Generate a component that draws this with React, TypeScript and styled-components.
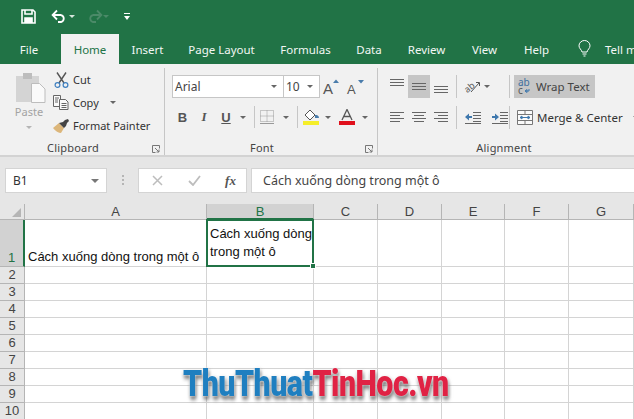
import { Fragment } from 'react';
import styled, { createGlobalStyle } from 'styled-components';

const GlobalStyle = createGlobalStyle`
  html, body { margin: 0; padding: 0; width: 634px; height: 419px; overflow: hidden; background: #fff; }
  * { box-sizing: border-box; }
`;

const UI_FONT = `"Noto Sans", "Open Sans", sans-serif`;
const GREEN = '#217346';

const Page = styled.div`
  position: relative;
  width: 634px;
  height: 419px;
  overflow: hidden;
  font-family: ${UI_FONT};
  display: flex;
  flex-direction: column;
`;

const TitleBar = styled.div`
  height: 34px;
  background: ${GREEN};
  display: flex;
  align-items: center;
  padding: 0 0 2px 21px;
`;

const QuickSlot = styled.div<{ $gap: number }>`
  display: flex;
  margin-left: ${(p) => p.$gap}px;
`;

const TabBar = styled.div`
  height: 30px;
  background: ${GREEN};
  display: flex;
  overflow: hidden;
`;

const Tab = styled.div<{ $active?: boolean; $width: number; $gap?: number }>`
  flex: none;
  width: ${(p) => p.$width}px;
  margin-left: ${(p) => p.$gap ?? 0}px;
  font-size: 11.5px;
  line-height: 31px;
  text-align: center;
  white-space: nowrap;
  color: ${(p) => (p.$active ? GREEN : '#f2f7f4')};
  background: ${(p) => (p.$active ? '#f1f1f1' : 'transparent')};
`;

const TellMe = styled.div`
  flex: none;
  display: flex;
  align-items: center;
  gap: 14px;
  margin-left: 15px;
  font-size: 11.5px;
  color: #f2f7f4;
  white-space: nowrap;
  svg { margin-top: -1px; }
`;

const Ribbon = styled.div`
  height: 93px;
  background: #f1f1f1;
  border-bottom: 2px solid #d3d3d3;
  display: flex;
  padding-top: 4px;
`;

const Group = styled.div<{ $width: number; $divider?: boolean }>`
  position: relative;
  width: ${(p) => p.$width}px;
  flex: none;
  display: flex;
  flex-direction: column;
  border-right: ${(p) => (p.$divider ? '1px solid #c6c6c6' : 'none')};
`;

const GroupBody = styled.div`
  flex: 1;
  display: flex;
  min-height: 0;
`;

const GroupLabel = styled.div<{ $inset?: number; $width?: number }>`
  height: 17px;
  width: ${(p) => (p.$width ? `${p.$width}px` : 'auto')};
  padding: 2px ${(p) => p.$inset ?? 0}px 0 0;
  font-size: 11px;
  line-height: 15px;
  letter-spacing: 0.2px;
  text-align: center;
  color: #444;
`;

const Launcher = styled.svg`
  position: absolute;
  right: 4px;
  bottom: 2px;
`;

const PasteCol = styled.div`
  width: 46px;
  margin-left: 8px;
  display: flex;
  flex-direction: column;
  align-items: center;
  padding-top: 4px;
  font-size: 11px;
  line-height: 15px;
  color: #a3a3a3;
  span { margin: 0 4px 0 0; }
  i { margin: 7px 4px 0 0; }
`;

const ClipCol = styled.div`
  display: flex;
  flex-direction: column;
  margin-left: -2px;
`;

const ClipRow = styled.div`
  height: 23px;
  display: flex;
  align-items: center;
  gap: 3px;
  font-size: 11px;
  color: #333;
  white-space: nowrap;
`;

const ClipIcon = styled.div`
  width: 18px;
  display: flex;
  justify-content: center;
`;

const Caret = styled.i<{ $tone?: string; $gap?: number; $big?: boolean }>`
  display: inline-block;
  flex: none;
  width: 0;
  height: 0;
  margin-left: ${(p) => p.$gap ?? 0}px;
  border-left: ${(p) => (p.$big ? 4 : 3)}px solid transparent;
  border-right: ${(p) => (p.$big ? 4 : 3)}px solid transparent;
  border-top: ${(p) => (p.$big ? 4 : 3)}px solid ${(p) => p.$tone ?? '#666'};
`;

const FontStack = styled.div`
  display: flex;
  flex-direction: column;
  gap: 8px;
  padding: 7px 0 0 7px;
`;

const FontRow = styled.div`
  display: flex;
  align-items: center;
`;

const Combo = styled.div<{ $width: number }>`
  width: ${(p) => p.$width}px;
  height: 23px;
  background: #fff;
  border: 1px solid #c6c6c6;
  display: flex;
  align-items: center;
  justify-content: space-between;
  padding: 0 6px 0 2px;
  margin-right: -1px;
  font-size: 12px;
  color: #444;
`;

const IconCell = styled.div<{ $width: number; $height?: number; $on?: boolean; $align?: string; $pad?: number }>`
  width: ${(p) => p.$width}px;
  height: ${(p) => p.$height ?? 22}px;
  flex: none;
  display: flex;
  padding: ${(p) => p.$pad ?? 0}px 0;
  align-items: ${(p) => p.$align ?? 'center'};
  justify-content: center;
  background: ${(p) => (p.$on ? '#c6c6c6' : 'transparent')};
`;

const Flipped = styled(IconCell)`
  transform: scaleX(-1);
`;

const StyleLetter = styled.span<{ $italic?: boolean; $under?: boolean; $serif?: boolean }>`
  font-family: ${(p) => (p.$serif ? '"Liberation Serif", serif' : '"Liberation Sans", sans-serif')};
  font-size: 13px;
  font-weight: bold;
  font-style: ${(p) => (p.$italic ? 'italic' : 'normal')};
  text-decoration: ${(p) => (p.$under ? 'underline' : 'none')};
  color: #555;
`;

const VRule = styled.div<{ $height?: number; $gap?: number }>`
  width: 1px;
  height: ${(p) => p.$height ?? 22}px;
  margin-left: ${(p) => p.$gap ?? 0}px;
  background: #c6c6c6;
  flex: none;
`;

const AlignGrid = styled.div`
  display: grid;
  grid-template-columns: 22px 22px 22px 4px 1px 7px 26px 19px 1px;
  grid-template-rows: 23px 23px;
  row-gap: 8px;
  padding: 7px 0 0 8px;
`;

const WrapCol = styled.div`
  display: flex;
  flex-direction: column;
  gap: 8px;
  padding: 7px 0 0 4px;
`;

const WrapButton = styled.div`
  width: 81px;
  height: 23px;
  background: #c6c6c6;
  display: flex;
  align-items: center;
  gap: 4px;
  padding-left: 4px;
  font-size: 11.5px;
  color: #444;
`;

const MergeButton = styled.div`
  height: 23px;
  display: flex;
  align-items: center;
  gap: 4px;
  padding-left: 3px;
  font-size: 11.5px;
  white-space: nowrap;
  color: #333;
`;

const FormulaBar = styled.div`
  height: 47px;
  background: #e6e6e6;
  display: flex;
  align-items: flex-start;
  padding: 11px 0 0 5px;
`;

const NameBox = styled.div`
  width: 102px;
  height: 25px;
  background: #fff;
  border: 1px solid #d4d4d4;
  display: flex;
  align-items: center;
  justify-content: space-between;
  padding: 0 7px;
  font-size: 12px;
  color: #333;
`;

const Grip = styled.div`
  width: 31px;
  height: 25px;
  display: flex;
  align-items: center;
  justify-content: center;
  padding-left: 1px;
`;

const FxBox = styled.div`
  width: 109px;
  height: 25px;
  background: #fff;
  border: 1px solid #d4d4d4;
  display: grid;
  grid-template-columns: 37px 37px 35px;
  place-items: center;
`;

const FxLabel = styled.span`
  font-family: "Liberation Serif", serif;
  font-style: italic;
  font-weight: bold;
  font-size: 13px;
  color: #555;
`;

const FormulaInput = styled.div`
  flex: 1;
  height: 25px;
  margin-left: 4px;
  background: #fff;
  border: 1px solid #d4d4d4;
  border-right: none;
  padding-left: 11px;
  font-size: 12.5px;
  line-height: 23px;
  color: #444;
  white-space: nowrap;
`;

const Sheet = styled.div`
  position: relative;
  flex: 1;
  display: grid;
  grid-template-columns: 25px 182px 107px 64px 64px 63px 64px 65px;
  grid-template-rows: 16px 47px repeat(9, 17px);
  background: #fff;
  font-family: "Liberation Sans", Arial, sans-serif;
  overflow: hidden;
`;

const Corner = styled.div`
  background: #e6e6e6;
  border-right: 1px solid #b5b5b5;
  border-bottom: 1px solid #b5b5b5;
  display: flex;
  align-items: flex-end;
  justify-content: flex-end;
  padding: 0 3px 2px 0;
`;

const ColHead = styled.div<{ $on?: boolean }>`
  background: ${(p) => (p.$on ? '#d2d2d2' : '#e6e6e6')};
  border-right: 1px solid #b5b5b5;
  border-bottom: ${(p) => (p.$on ? `2px solid ${GREEN}` : '1px solid #b5b5b5')};
  color: ${(p) => (p.$on ? GREEN : '#444')};
  font-size: 13px;
  line-height: 16px;
  text-align: center;
`;

const RowHead = styled.div<{ $on?: boolean }>`
  background: ${(p) => (p.$on ? '#d2d2d2' : '#e6e6e6')};
  border-right: ${(p) => (p.$on ? `2px solid ${GREEN}` : '1px solid #b5b5b5')};
  border-bottom: 1px solid #b5b5b5;
  color: ${(p) => (p.$on ? GREEN : '#444')};
  font-size: 13px;
  line-height: 15px;
  text-align: center;
  display: flex;
  align-items: flex-end;
  justify-content: center;
  padding-bottom: 1px;
`;

const Cell = styled.div`
  border-right: 1px solid #d4d4d4;
  border-bottom: 1px solid #d4d4d4;
  font-size: 13px;
  line-height: 18px;
  color: #111;
  padding: 0 3px;
  display: flex;
  align-items: flex-end;
  white-space: nowrap;
`;

const ActiveCell = styled(Cell)`
  position: relative;
  margin: -1px 0 0 -1px;
  border: 2px solid ${GREEN};
  white-space: normal;
  padding: 0 0 0 2px;
  align-items: center;
`;

const FillHandle = styled.div`
  position: absolute;
  right: -4px;
  bottom: -4px;
  width: 6px;
  height: 6px;
  background: ${GREEN};
  border: 1px solid #fff;
`;

const Watermark = styled.div`
  position: absolute;
  left: 183px;
  top: 160px;
  font-family: "Roboto", "Liberation Sans", sans-serif;
  font-weight: 900;
  font-size: 37px;
  line-height: 40px;
  letter-spacing: -0.6px;
  white-space: nowrap;
  transform-origin: left top;
  transform: scaleX(0.82);
  filter: drop-shadow(0 0 1px #fff) drop-shadow(1px 3px 2px rgba(60, 60, 60, 0.75));
`;

const Blue = styled.span`color: #1f7fc0;`;
const Red = styled.span`color: #e02244;`;

const GlyphSvg = styled.svg`
  overflow: visible;
`;

const SaveIcon = () => (
  <svg width="15" height="15" viewBox="0 0 15 15" fill="none" stroke="#fff" strokeWidth="1.6">
    <path d="M1 1h11l2 2v11H1z" />
    <path d="M4 1v4h7V1" />
    <path d="M4 14V9h7v5" fill="#fff" />
  </svg>
);

const UndoIcon = ({ color }: { color: string }) => (
  <svg width="16" height="14" viewBox="0 0 16 14" fill="none" stroke={color} strokeWidth="1.8">
    <path d="M2 6h8a3.6 3.6 0 0 1 0 7H7" />
    <path d="M6 1.500 1.600 6 6 10.500" />
  </svg>
);

const PasteIcon = () => (
  <svg width="30" height="32" viewBox="0 0 30 32">
    <rect x="0" y="4" width="23" height="26" fill="#d4d4d4" />
    <rect x="7" y="1" width="9" height="6" fill="#bdbdbd" />
    <path d="M15.500 11.500h8l5.500 5.500v13.500h-13.500z" fill="#fafafa" stroke="#bdbdbd" />
  </svg>
);

const CutIcon = () => (
  <svg width="15" height="16" viewBox="0 0 15 16" fill="none">
    <path d="M3 0.500 10 11M12 0.500 5 11" stroke="#555" strokeWidth="1.4" />
    <circle cx="3.500" cy="13" r="2.400" stroke="#3f7fbf" strokeWidth="1.200" />
    <circle cx="11.500" cy="13" r="2.400" stroke="#3f7fbf" strokeWidth="1.200" />
  </svg>
);

const CopyIcon = () => (
  <svg width="16" height="15" viewBox="0 0 16 15" fill="#fafafa" stroke="#666">
    <path d="M.5.500h7v11h-7z" />
    <path d="M6.500 4.500h6l2.500 2.500v7.500h-8.500z" />
    <path d="M8.500 8.500h5M8.500 10.500h5M8.500 12.500h5M2 3h4M2 5h3M2 7h3" strokeWidth="1" />
  </svg>
);

const PainterIcon = () => (
  <svg width="17" height="14" viewBox="0 0 17 14">
    <path d="M0 9l6-5 5 5-3 5C6 14 2 12 0 9z" fill="#dcb67a" />
    <path d="M6 4l4-1 2-2 3-1 1 2-2 2-1 3-2 2z" fill="#444" />
  </svg>
);

const LauncherIcon = () => (
  <Launcher width="8" height="8" viewBox="0 0 8 8" fill="none" stroke="#777">
    <path d="M7.500 3.500V.5H.5v7h3" />
    <path d="M3 3l4 4M7 4.500V7H4.500" />
  </Launcher>
);

const GrowFont = ({ up }: { up: boolean }) => (
  <GlyphSvg width="18" height="18" viewBox="0 0 18 18">
    <text x="0" y="16" fontFamily="Liberation Sans" fontSize={up ? 15 : 13} fill="#555">A</text>
    <path d={up ? 'M10 5l3-3.500L16 5z' : 'M11 2h6l-3 3.500z'} fill="#4a7cab" />
  </GlyphSvg>
);

const BordersIcon = () => (
  <svg width="14" height="14" viewBox="0 0 14 14" fill="none" stroke="#999" strokeDasharray="1 1">
    <path d="M.5.500h13v11H.5zM7 .5v11M.5 6h13" />
    <path d="M0 13.500h14" strokeDasharray="none" />
  </svg>
);

const FillColor = () => (
  <svg width="17" height="16" viewBox="0 0 17 16">
    <path d="M2 6l5-5 5 5-5 5z" fill="#fff" stroke="#555" />
    <path d="M12 6c2 0 4 .5 4 3H12z" fill="#4a7cab" />
    <rect y="12" width="16" height="4" fill="#f5ee2a" />
  </svg>
);

const FontColor = () => (
  <svg width="16" height="16" viewBox="0 0 16 16">
    <path d="M3 11 8 0.500 13 11M5 7.500h6" fill="none" stroke="#555" strokeWidth="1.300" />
    <rect y="12" width="16" height="4" fill="#e0101c" />
  </svg>
);

const Lines = ({ widths, anchor = 'left', color = '#666' }: { widths: number[]; anchor?: 'left' | 'center' | 'right'; color?: string }) => (
  <svg width="14" height={widths.length * 3 + 1} viewBox={`0 0 14 ${widths.length * 3 + 1}`} stroke={color}>
    {widths.map((w, i) => {
      const x = anchor === 'left' ? 0 : anchor === 'right' ? 14 - w : (14 - w) / 2;
      return <path key={i} d={`M${x} ${i * 3 + 1.5}h${w}`} />;
    })}
  </svg>
);

const OrientIcon = () => (
  <GlyphSvg width="17" height="15" viewBox="0 0 17 15">
    <text x="0" y="11" transform="rotate(-40 6 8)" fontFamily="Noto Sans" fontSize="9" fill="#555">ab</text>
    <path d="M7 13 15 4M12 3.500h3.500V7" stroke="#555" fill="none" />
  </GlyphSvg>
);

const IndentIcon = ({ out }: { out?: boolean }) => (
  <svg width="16" height="13" viewBox="0 0 16 13" fill="none">
    <path d="M8 1.500h8M8 4.500h8M8 7.500h8M8 10.500h8" stroke="#666" />
    <path d="M0 12.500h16" stroke="#666" />
    <path d={out ? 'M0 6l4-3.500v2.500h3v2H4v2.500z' : 'M7 6 3 2.500v2.500H0v2h3v2.500z'} fill="#3f78ad" />
  </svg>
);

const WrapIcon = () => (
  <GlyphSvg width="14" height="17" viewBox="0 0 14 17">
    <text x="0" y="8" fontFamily="Noto Sans" fontSize="10" fill="#3f6f9f">ab</text>
    <text x="0" y="16" fontFamily="Noto Sans" fontSize="10" fill="#555">c</text>
    <path d="M7 13h4v-2M7 13l2-1.500v3z" stroke="#3f78ad" fill="none" />
  </GlyphSvg>
);

const MergeIcon = () => (
  <svg width="16" height="15" viewBox="0 0 16 15" fill="#fafafa" stroke="#777">
    <path d="M.5.500h15v14H.5z" />
    <path d="M.5 4.500h15M.5 10.500h15M8 .5v4M8 10.500v4" fill="none" />
    <path d="M3 7.500h10M3 7.500l2-1.500v3zM13 7.500l-2-1.500v3z" stroke="#3f78ad" />
  </svg>
);

const RowNumbers = [2, 3, 4, 5, 6, 7, 8, 9, 10];
const Cols = ['A', 'B', 'C', 'D', 'E', 'F', 'G'];
const Tabs = [
  { label: 'Insert', width: 57 },
  { label: 'Page Layout', width: 91 },
  { label: 'Formulas', width: 77 },
  { label: 'Data', width: 50 },
  { label: 'Review', width: 65 },
  { label: 'View', width: 51 },
  { label: 'Help', width: 53 },
];
const TEXT = 'Cách xuống dòng trong một ô';

export default function App() {
  return (
    <Page>
      <GlobalStyle />
      <TitleBar>
        <SaveIcon />
        <QuickSlot $gap={14}>
          <IconCell $width={26}><UndoIcon color="#fff" /><Caret $tone="#d6e6dc" $gap={2} /></IconCell>
        </QuickSlot>
        <QuickSlot $gap={9}>
          <Flipped $width={26}><Caret $tone="#4b8a68" /><UndoIcon color="#4b8a68" /></Flipped>
        </QuickSlot>
        <QuickSlot $gap={13}>
          <svg width="6" height="7" viewBox="0 0 6 7" fill="#fff"><path d="M0 0h6v1H0zM0 3h6L3 7z" /></svg>
        </QuickSlot>
      </TitleBar>
      <TabBar>
        <Tab $width={58}>File</Tab>
        <Tab $active $width={58} $gap={3}>Home</Tab>
        {Tabs.map((t) => (
          <Tab key={t.label} $width={t.width}>{t.label}</Tab>
        ))}
        <TellMe>
          <svg width="13" height="17" viewBox="0 0 13 17" fill="none" stroke="#fff">
            <path d="M4 12C3.500 9.500 1 8.500 1 5.800a5.500 5.300 0 0 1 11 0C12 8.500 9.500 9.500 9 12z" />
            <path d="M4.500 14h4M5.500 16h2" />
          </svg>
          Tell me
        </TellMe>
      </TabBar>

      <Ribbon>
        <Group $width={165} $divider>
          <GroupBody>
            <PasteCol>
              <PasteIcon />
              <span>Paste</span>
              <Caret $tone="#b5b5b5" />
            </PasteCol>
            <ClipCol>
              <ClipRow><ClipIcon><CutIcon /></ClipIcon>Cut</ClipRow>
              <ClipRow><ClipIcon><CopyIcon /></ClipIcon>Copy<Caret $gap={8} /></ClipRow>
              <ClipRow><ClipIcon><PainterIcon /></ClipIcon>Format Painter</ClipRow>
            </ClipCol>
          </GroupBody>
          <GroupLabel $inset={18}>Clipboard</GroupLabel>
          <LauncherIcon />
        </Group>

        <Group $width={213} $divider>
          <GroupBody>
            <FontStack>
              <FontRow>
                <Combo $width={112}>Arial<Caret /></Combo>
                <Combo $width={37}>10<Caret /></Combo>
                <IconCell $width={26} $height={23}><GrowFont up /></IconCell>
                <IconCell $width={22} $height={23}><GrowFont up={false} /></IconCell>
              </FontRow>
              <FontRow>
                <IconCell $width={21}><StyleLetter>B</StyleLetter></IconCell>
                <IconCell $width={22}><StyleLetter $italic $serif>I</StyleLetter></IconCell>
                <IconCell $width={22}><StyleLetter $under>U</StyleLetter></IconCell>
                <IconCell $width={12}><Caret /></IconCell>
                <VRule $gap={5} />
                <IconCell $width={24}><BordersIcon /></IconCell>
                <IconCell $width={14}><Caret /></IconCell>
                <VRule $gap={4} />
                <IconCell $width={26}><FillColor /></IconCell>
                <IconCell $width={8}><Caret /></IconCell>
                <IconCell $width={30}><FontColor /></IconCell>
                <IconCell $width={5}><Caret /></IconCell>
              </FontRow>
            </FontStack>
          </GroupBody>
          <GroupLabel $inset={18}>Font</GroupLabel>
          <LauncherIcon />
        </Group>

        <Group $width={256}>
          <GroupBody>
            <AlignGrid>
              <IconCell $width={22} $height={23} $align="flex-start" $pad={3}><Lines widths={[14, 14, 14]} /></IconCell>
              <IconCell $width={22} $height={23} $on><Lines widths={[14, 14, 14]} /></IconCell>
              <IconCell $width={22} $height={23} $align="flex-end" $pad={3}><Lines widths={[14, 14, 14]} /></IconCell>
              <span />
              <VRule $height={23} />
              <span />
              <IconCell $width={26} $height={23}><OrientIcon /><Caret $gap={3} /></IconCell>
              <span />
              <VRule $height={23} />

              <IconCell $width={22} $height={23}><Lines widths={[14, 10, 14, 10]} /></IconCell>
              <IconCell $width={22} $height={23}><Lines widths={[14, 10, 14, 10]} anchor="center" /></IconCell>
              <IconCell $width={22} $height={23}><Lines widths={[14, 10, 14, 10]} anchor="right" /></IconCell>
              <span />
              <VRule $height={23} />
              <span />
              <IconCell $width={18} $height={23}><IndentIcon out /></IconCell>
              <IconCell $width={20} $height={23}><IndentIcon /></IconCell>
              <VRule $height={23} />
            </AlignGrid>
            <WrapCol>
              <WrapButton><WrapIcon />Wrap Text</WrapButton>
              <MergeButton><MergeIcon />Merge &amp; Center<Caret $gap={6} /></MergeButton>
            </WrapCol>
          </GroupBody>
          <GroupLabel $width={252}>Alignment</GroupLabel>
        </Group>
      </Ribbon>

      <FormulaBar>
        <NameBox>B1<Caret $tone="#777" $big /></NameBox>
        <Grip>
          <svg width="2" height="11" viewBox="0 0 2 11" fill="#b5b5b5"><path d="M0 0h2v2H0zM0 4h2v2H0zM0 8h2v2H0z" /></svg>
        </Grip>
        <FxBox>
          <svg width="11" height="11" viewBox="0 0 11 11" stroke="#bdbdbd" strokeWidth="1.500"><path d="M1 1l9 9M10 1l-9 9" /></svg>
          <svg width="13" height="11" viewBox="0 0 13 11" stroke="#bdbdbd" strokeWidth="1.800" fill="none"><path d="M1 6l4 4 7-9" /></svg>
          <FxLabel>fx</FxLabel>
        </FxBox>
        <FormulaInput>{TEXT}</FormulaInput>
      </FormulaBar>

      <Sheet>
        <Corner>
          <svg width="9" height="9" viewBox="0 0 9 9" fill="#b5b5b5"><path d="M9 0v9H0z" /></svg>
        </Corner>
        {Cols.map((c) => (
          <ColHead key={c} $on={c === 'B'}>{c}</ColHead>
        ))}

        <RowHead $on>1</RowHead>
        <Cell>{TEXT}</Cell>
        <ActiveCell>
          {TEXT}
          <FillHandle />
        </ActiveCell>
        {Cols.slice(2).map((c) => <Cell key={c} />)}

        {RowNumbers.map((n) => (
          <Fragment key={n}>
            <RowHead>{n}</RowHead>
            {Cols.map((c) => <Cell key={c + n} />)}
          </Fragment>
        ))}
        <Watermark>
          <Blue>ThuThuat</Blue><Red>TinHoc.vn</Red>
        </Watermark>
      </Sheet>
    </Page>
  );
}
